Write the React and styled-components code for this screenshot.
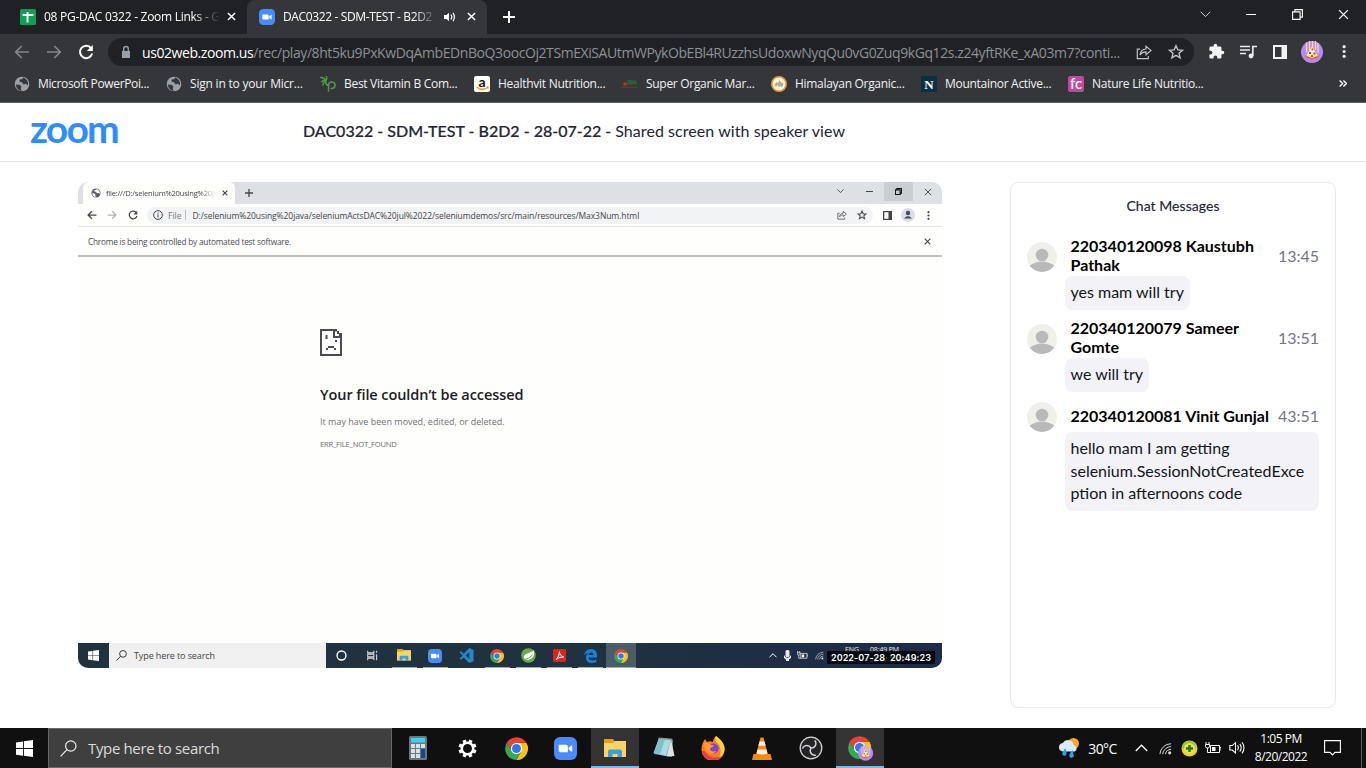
import React from "react";
import styled, { createGlobalStyle, css } from "styled-components";

const UI = `"Open Sans", "Noto Sans", sans-serif`;

const Global = createGlobalStyle`
  * { box-sizing: border-box; }
  body { margin: 0; background: #fff; font-family: ${UI}; overflow: hidden; }
  svg { display: block; flex: none; }
`;

const Screen = styled.div`
  width: 1366px;
  height: 768px;
  display: flex;
  flex-direction: column;
  overflow: hidden;
`;

const Label = styled.span`
  white-space: nowrap;
  letter-spacing: ${(p) => p.$ls || 0}px;
  color: ${(p) => p.$c || "inherit"};
`;

/* ---------- browser chrome ---------- */
const TabStrip = styled.div`
  height: 34px;
  flex: none;
  background: #202124;
  display: flex;
  color: #fff;
`;
const Tab = styled.div`
  width: ${(p) => p.$w}px;
  height: 34px;
  padding: 0 11px 1px ${(p) => p.$pad}px;
  display: flex;
  align-items: center;
  font-size: 12px;
  background: ${(p) => (p.$active ? "#35363a" : "transparent")};
  border-radius: 8px 8px 0 0;
`;
const TabTitle = styled.div`
  width: ${(p) => p.$w}px;
  margin-left: ${(p) => (p.$ml === undefined ? 8 : p.$ml)}px;
  overflow: hidden;
  white-space: nowrap;
  letter-spacing: ${(p) => p.$ls}px;
  mask-image: linear-gradient(90deg, #000 85%, transparent);
`;
const Spacer = styled.div`
  flex: ${(p) => (p.$w ? "none" : 1)};
  width: ${(p) => (p.$w ? p.$w + "px" : "auto")};
`;
const WindowButton = styled.div`
  width: ${(p) => p.$w || 46}px;
  height: ${(p) => p.$h || 29}px;
  display: flex;
  align-items: center;
  justify-content: center;
`;
const Toolbar = styled.div`
  height: 34px;
  flex: none;
  background: #35363a;
  display: flex;
  align-items: center;
  padding: 1px 0 0 14px;
`;
const Omnibox = styled.div`
  width: 1086px;
  height: 28px;
  margin: 1px 0 0 14px;
  border-radius: 14px;
  background: #202124;
  display: flex;
  align-items: center;
  padding: 0 10px 0 11px;
  color: #9aa0a6;
  font-size: 14px;
`;
const Url = styled.div`
  width: 984px;
  margin-left: 9px;
  white-space: nowrap;
  color: #8d9196;
  letter-spacing: -0.42px;
  b { font-weight: 400; color: #fff; }
`;
const Bookmarks = styled.div`
  height: 35px;
  flex: none;
  background: #35363a;
  border-bottom: 1px solid #5c5d61;
  padding: 0 0 3px 14px;
  display: flex;
  align-items: center;
  color: #f1f3f4;
  font-size: 12px;
`;
const Bookmark = styled.div`
  width: ${(p) => p.$w}px;
  display: flex;
  align-items: center;
  gap: 8px;
`;
const Avatar = styled.svg`
  border-radius: 50%;
`;

/* ---------- zoom page ---------- */
const Page = styled.main`
  height: 625px;
  flex: none;
  background: #fff;
  font-family: Lato, sans-serif;
`;
const PageHeader = styled.header`
  height: 59px;
  border-bottom: 1px solid #e8e8ec;
  display: flex;
  align-items: center;
  padding-left: 30px;
`;
const Wordmark = styled.div`
  width: 273px;
  height: 44px;
  line-height: 36px;
  font-size: 39px;
  font-weight: 700;
  letter-spacing: -1.8px;
  color: #2d8cff;
`;
const PageTitle = styled.h1`
  margin: 0 0 4px;
  font-size: 16px;
  font-weight: 400;
  color: #232333;
  white-space: nowrap;
  letter-spacing: 0.06px;
  b { font-weight: 500; letter-spacing: 0; -webkit-text-stroke: 0.2px #232333; }
`;
const Body = styled.div`
  display: flex;
  align-items: flex-start;
  padding: 20px 30px 0 78px;
  justify-content: space-between;
`;
const ChatPanel = styled.aside`
  width: 326px;
  height: 526px;
  border: 1px solid #e9e9f0;
  border-radius: 8px;
  padding: 13px 16px 0;
`;
const ChatTitle = styled.div`
  height: 20px;
  line-height: 19px;
  margin-bottom: 22px;
  text-align: center;
  font-size: 14px;
  color: #232333;
  -webkit-text-stroke: 0.15px #232333;
  letter-spacing: 0.05px;
`;
const Message = styled.div`
  margin-bottom: 10px;
`;
const MessageHead = styled.div`
  display: flex;
  align-items: center;
  min-height: 30px;
`;
const Sender = styled.div`
  width: 214px;
  padding: 0 0 3px 13.5px;
  margin: ${(p) => (p.$lines === 2 ? "-2px -10px 1px 0" : "0 -10px -1px 0")};
  font-size: 16px;
  line-height: 19px;
  font-weight: 700;
  color: #000;
  white-space: pre;
  height: ${(p) => (p.$lines === 2 ? 39 : 23)}px;
`;
const Time = styled.div`
  flex: 1;
  padding-bottom: ${(p) => (p.$lines === 2 ? 4 : 3)}px;
  text-align: right;
  font-size: 16px;
  color: #747487;
`;
const Bubble = styled.div`
  width: fit-content;
  margin-left: 38px;
  padding: 5px ${(p) => (p.$long ? 11 : 6)}px 6.5px 5.5px;
  border-radius: 8px;
  background: #f2f2f7;
  color: #131619;
  font-size: 16px;
  line-height: 22.6px;
  overflow-wrap: anywhere;
`;

/* ---------- shared screen video ---------- */
const Video = styled.section`
  width: 864px;
  height: 486px;
  border-radius: 10px;
  overflow: hidden;
  background: #fefefd;
  display: flex;
  flex-direction: column;
  font-family: ${UI};
  color: #44474a;
`;
const VideoTabs = styled.div`
  height: 22px;
  flex: none;
  background: #dee0e4;
  padding-left: 5px;
  display: flex;
`;
const VideoTab = styled.div`
  width: 152px;
  padding: 0 7px 0 8px;
  display: flex;
  align-items: center;
  background: #fefefd;
  border-radius: 6px 6px 0 0;
  font-size: 7.6px;
`;
const VideoWindowButton = styled.div`
  width: ${(p) => p.$w || 29}px;
  height: ${(p) => p.$h || 19}px;
  display: flex;
  align-items: center;
  justify-content: center;
  background: ${(p) => (p.$on ? "#cbcdd0" : "transparent")};
`;
const VideoToolbar = styled.div`
  height: 23px;
  flex: none;
  border-bottom: 1px solid #e6e7e9;
  display: flex;
  align-items: center;
  padding-left: 9px;
`;
const VideoUrl = styled.div`
  width: 726px;
  height: 17px;
  margin-left: 9px;
  border-radius: 9px;
  background: #f2f3f5;
  display: flex;
  align-items: center;
  padding: 0 6px;
  font-size: 8.5px;
`;
const Divider = styled.i`
  width: 1px;
  height: 10px;
  background: #b9bbbe;
  margin: 0 6px 0 4px;
`;
const InfoBar = styled.div`
  height: 30px;
  flex: none;
  border-bottom: 2px solid #bdbdbf;
  display: flex;
  align-items: center;
  justify-content: space-between;
  padding: 0 11px 0 10px;
  font-size: 8.3px;
  color: #4c4f52;
`;
const ErrorPage = styled.div`
  flex: 1;
  padding: 72px 0 0 242px;
  white-space: nowrap;
  h2 {
    margin: 29px 0 0;
    font-size: 14.5px;
    line-height: 20px;
    font-weight: 600;
    color: #202124;
    letter-spacing: -0.08px;
  }
  p { margin: 10px 0 0; font-size: 9px; line-height: 13px; color: #707274; letter-spacing: 0.01px; }
  small { display: block; margin-top: 10px; font-size: 7.6px; line-height: 12px; color: #6a6c6e; }
`;
const VideoTaskbar = styled.div`
  height: 25px;
  flex: none;
  background: linear-gradient(90deg, #1f333f, #20323f 55%, #1c2b49);
  display: flex;
  color: #fff;
`;
const VideoStart = styled.div`
  width: 31px;
  display: flex;
  align-items: center;
  justify-content: center;
`;
const VideoSearch = styled.div`
  width: 217px;
  background: #f0f0f0;
  display: flex;
  align-items: center;
  gap: 7px;
  padding-left: 7px;
  color: #444;
  font-size: 9px;
`;
const VideoTask = styled.div`
  width: 30px;
  margin-right: 1px;
  display: flex;
  align-items: center;
  justify-content: center;
  background: ${(p) => (p.$active ? "#4b5c69" : "transparent")};
  background-image: ${(p) => (p.$open ? "linear-gradient(#76b9ed, #76b9ed)" : "none")};
  background-size: ${(p) => (p.$active ? 30 : 25)}px 1.5px;
  background-position: center bottom;
  background-repeat: no-repeat;
`;
const VideoTray = styled.div`
  width: 173px;
  display: flex;
  align-items: center;
  gap: 6.5px;
  position: relative;
`;
const VideoClock = styled.div`
  position: absolute;
  left: 76px;
  top: 1.5px;
  display: grid;
  grid-template-columns: 25px auto;
  font-size: 6.9px;
  line-height: 10px;
  color: #f2f3f5;
`;
const Timestamp = styled.div`
  position: absolute;
  left: 58px;
  top: 8px;
  width: 108px;
  height: 13px;
  background: rgba(0, 0, 0, 0.78);
  font: 600 9px/13px Inter, sans-serif;
  text-align: center;
  white-space: nowrap;
  letter-spacing: 0.1px;
`;

/* ---------- desktop taskbar ---------- */
const Taskbar = styled.footer`
  height: 40px;
  flex: none;
  background: #101010;
  display: flex;
  color: #fff;
`;
const Start = styled.div`
  width: 48px;
  display: flex;
  align-items: center;
  justify-content: center;
`;
const Search = styled.div`
  width: 344px;
  margin-right: 2px;
  border: 1px solid #686868;
  background: #3f3f3f;
  display: flex;
  align-items: center;
  gap: 11px;
  padding-left: 11px;
  color: #dcdcdc;
  font-size: 15px;
`;
const Task = styled.div`
  width: 48px;
  margin-right: 1px;
  display: flex;
  align-items: center;
  justify-content: center;
  ${(p) =>
    p.$active &&
    css`
      background: #333;
      box-shadow: inset 0 -2px #76b9ed;
    `}
`;
const Tray = styled.div`
  flex: 1;
  display: flex;
  align-items: center;
  padding-left: 173px;
`;
const TrayItem = styled.div`
  width: ${(p) => p.$w}px;
  display: flex;
  align-items: center;
  justify-content: center;
  font-size: 14px;
`;
const Clock = styled.div`
  width: 64px;
  text-align: center;
  font-size: 12px;
  line-height: 18px;
  letter-spacing: -0.5px;
  white-space: nowrap;
`;
const Edge = styled.div`
  width: 1px;
  height: 40px;
  background: #5a5a5a;
`;

/* ---------- icons ---------- */
const Line = ({ w = 16, h = w, box = "0 0 16 16", c = "currentColor", sw = 1.5, children, ...r }) => (
  <svg width={w} height={h} viewBox={box} fill="none" stroke={c} strokeWidth={sw} {...r}>
    {children}
  </svg>
);
const Close = ({ s = 9, c = "#fff", sw = 1.6 }) => (
  <Line w={s} box="0 0 10 10" c={c} sw={sw}><path d="M1 1l8 8M9 1L1 9" /></Line>
);
const Plus = ({ s = 12, c = "#fff", sw = 2 }) => (
  <Line w={s} box="0 0 12 12" c={c} sw={sw}><path d="M6 0v12M0 6h12" /></Line>
);
const Arrow = ({ s = 16, c, flip, sw = 1.7 }) => (
  <Line w={s} c={c} sw={sw}>
    <path d={flip ? "M1 8h13M8.3 2l6 6-6 6" : "M15 8H2M7.7 2l-6 6 6 6"} />
  </Line>
);
const Reload = ({ s = 16, c = "#fff", sw = 2 }) => (
  <Line w={s} c={c} sw={sw}>
    <path d="M13.2 4.2A6.2 6.2 0 1 0 14.2 9.6" />
    <path d="M14.8 1v6h-6z" fill={c} stroke="none" />
  </Line>
);
const Down = ({ s = 11, c = "#ccc", up, sw = 1 }) => (
  <Line w={s} h={s * 0.6} box="0 0 12 7" c={c} sw={sw}>
    <path d={up ? "M.7 6.3L6 1l5.3 5.3" : "M.7.7L6 6 11.3.7"} />
  </Line>
);
const Restore = ({ s = 11, c = "#fff", sw = 1.1 }) => (
  <Line w={s} box="0 0 11 11" c={c} sw={sw}><path d="M.6 2.9h7.5v7.5H.6zM2.9 2.9V.6h7.5v7.5H8.1" /></Line>
);
const Share = ({ s = 16, c = "#bdc1c6", sw = 1.2 }) => (
  <Line w={s} c={c} sw={sw}>
    <path d="M4.2 5.2H1.3v9.4h11v-2.5M4 11c.4-4 2.7-5.9 6-6V2.2L15 6.4l-5 4.2V7.9C7.2 7.8 5.5 8.8 4 11z" />
  </Line>
);
const Star = ({ s = 16, c = "#bdc1c6", sw = 1.4 }) => (
  <Line w={s} c={c} sw={sw}>
    <path d="M8 1.7l1.9 4.2 4.6.4-3.5 3 1.1 4.5L8 11.4l-4.1 2.4L5 9.3l-3.5-3 4.6-.4z" />
  </Line>
);
const Puzzle = () => (
  <svg width="17" height="17" viewBox="0 0 24 24" fill="#f1f3f4">
    <path d="M20.500 11H19V7a2 2 0 0 0-2-2h-4V3.500a2.500 2.500 0 0 0-5 0V5H4a2 2 0 0 0-2 2v3.800h1.500a2.700 2.700 0 0 1 0 5.400H2V20a2 2 0 0 0 2 2h3.800v-1.500a2.700 2.700 0 0 1 5.400 0V22H17a2 2 0 0 0 2-2v-4h1.500a2.500 2.500 0 0 0 0-5z" />
  </svg>
);
const Queue = () => (
  <Line w={17} h={14} box="0 0 17 14" c="#e8eaed" sw={1.7}>
    <path d="M0 1.500h10M0 5h10M0 8.500h6M12.800 11V1.500H17" />
    <circle cx="11" cy="11" r="2.400" fill="#e8eaed" stroke="none" />
  </Line>
);
const Side = ({ s = 14, c = "#f1f3f4" }) => (
  <svg width={s} height={s} viewBox="0 0 14 14">
    <path fillRule="evenodd" fill={c} d="M0 0h14v14H0zM2 2v10h6.500V2z" />
  </svg>
);
const Dots = ({ h = 13, c = "#f1f3f4" }) => (
  <svg width={h / 3} height={h} viewBox="0 0 4 13" fill={c}>
    <circle cx="2" cy="1.700" r="1.600" /><circle cx="2" cy="6.500" r="1.600" /><circle cx="2" cy="11.300" r="1.600" />
  </svg>
);
const PizzaArt = () => (
  <>
    <circle cx="11" cy="11" r="11" fill="#b58af5" />
    <path d="M5.500 1.500v10M8.500 0v9M11.500 0v9M14.500 0v9M17 2v10" stroke="#f1df9e" strokeWidth="1.300" />
    <path d="M11 5.500l-6.500 10q6.500 4.500 13 0z" fill="#fff0b5" />
    <path d="M4.300 15q6.700 5 13.400 0" stroke="#f0633b" strokeWidth="1.700" fill="none" />
    <path d="M10.500 7.500h1.700v1.700h-1.700zM8 11h2v2H8zM12.500 11.500h2v2h-2zM10 14.300h2V16h-2z" fill="#d8352c" />
  </>
);
const Globe = ({ s = 15, c = "#9aa0a6", land = "#35363a" }) => (
  <svg width={s} height={s} viewBox="0 0 16 16">
    <circle cx="8" cy="8" r="7.300" fill={c} />
    <path d="M2 8.500l3.500.3 2 1.800-.8 2.100 1.200 2.300C4.500 14.500 2 12 2 8.500zM9.500 1.500L7.800 3.200l-2.300.3v2l2.800 1 1 2 2.500-.7 2.300 1.400c.3-3.500-1-6-4.600-7.700z" fill={land} />
  </svg>
);
const Sheets = () => (
  <svg width="16" height="16" viewBox="0 0 16 16">
    <rect width="16" height="16" rx="1.500" fill="#109d58" />
    <path d="M2.500 6h11M7.500 3v10.500" stroke="#fff" strokeWidth="1.900" />
  </svg>
);
const ZoomIcon = ({ s = 16 }) => (
  <svg width={s} height={s} viewBox="0 0 24 24">
    <rect width="24" height="24" rx="6.500" fill="#4a8cf7" />
    <path d="M5 8.200h7.500q2 0 2 2v5.600H7q-2 0-2-2zM15.300 10.900L19 8.300v7.400l-3.700-2.600z" fill="#fff" />
  </svg>
);
const Chrome = ({ s = 23, badge }) => (
  <svg width={badge ? s + 2 : s} height={badge ? s + 2 : s} viewBox={badge ? "0 0 26 26" : "0 0 24 24"}>
    <path d="M12 12V6h10.300A11.900 11.900 0 0 1 11.700 24L17 15z" fill="#fbc116" />
    <path d="M12 12l5 3-5.300 9A11.900 11.900 0 0 1 1.800 6L7 15z" fill="#34a853" />
    <path d="M1.800 6A11.900 11.900 0 0 1 22.300 6H12a6 6 0 0 0-5.200 9z" fill="#ea4335" />
    <circle cx="12" cy="12" r="6" fill="#fff" />
    <circle cx="12" cy="12" r="4.700" fill="#3278e8" />
    {badge && <g transform="translate(10.500 10) scale(.71)"><PizzaArt /></g>}
  </svg>
);
const Windows = ({ s = 17, c = "#fff" }) => (
  <svg width={s} height={s} viewBox="0 0 17 17" fill={c}>
    <path d="M0 2.400l7-1v6.700H0zM7.900 1.300L17 0v8.100H7.900zM0 9h7v6.700l-7-1zM7.900 9H17v8l-9.100-1.300z" />
  </svg>
);
const Glass = ({ s = 17, c = "#eee", sw = 1.2 }) => (
  <Line w={s} box="0 0 17 17" c={c} sw={sw}><circle cx="10.800" cy="6" r="5.200" /><path d="M7 9.700L.6 16.400" /></Line>
);
const Folder = ({ s = 22 }) => (
  <svg width={s} height={s * 0.86} viewBox="0 0 22 19">
    <path d="M0 0h9l1.500 2H22v16H0z" fill="#e0a21b" />
    <path d="M0 4h9l2-2h11v16H0z" fill="#fcd462" />
    <path d="M4 19v-6.500q0-2 2-2h10q2 0 2 2V19h-4.500v-4h-5v4z" fill="#3f9ede" />
  </svg>
);
const Calc = () => (
  <svg width="18" height="24" viewBox="0 0 18 24">
    <rect width="18" height="24" rx="1.500" fill="#6d7782" />
    <path d="M2 2h14v4.500H2z" fill="#3ed1f7" />
    <path d="M2 8h4v4H2zM7 8h4v4H7zM12 8h4v4h-4zM2 13h4v4H2zM7 13h4v4H7zM2 18h4v4H2zM7 18h4v4H7z" fill="#d9e0e6" />
    <path d="M12 13h4v9h-4z" fill="#0f4a91" />
  </svg>
);
const Gear = () => (
  <svg width="19" height="19" viewBox="-10 -10 20 20" fill="none" stroke="#fff">
    <circle r="6" strokeWidth="2.600" />
    {[0, 45, 90, 135, 180, 225, 270, 315].map((a) => (
      <path key={a} transform={`rotate(${a + 22.5})`} d="M0-6.500V-9.500" strokeWidth="3.600" />
    ))}
  </svg>
);
const Notepad = () => (
  <svg width="24" height="24" viewBox="0 0 24 24">
    <path d="M7 2l14 2-1 17L2 18z" fill="#4d96a3" />
    <path d="M7 2l12 1-5 17L1.500 17z" fill="#a9dbe2" />
    <path d="M7 3l6 .5L8 18l-6-1z" fill="#7fc0cb" />
    <path d="M19 3l3.500 17-8 .5z" fill="#dce0de" />
    <path d="M7 1.500l13.500 1.200-.4 1.500L6.500 3z" fill="#8b949a" />
  </svg>
);
const Firefox = () => (
  <svg width="24" height="24" viewBox="0 0 24 24">
    <path d="M15 0c5 4 9 8 8.500 14A11.500 11.500 0 0 1 .5 13C.5 9 2 6 4 3l2 3c2-1 4-1 6 0 0-2 1-4 3-6z" fill="#ff7a25" />
    <path d="M15 0c5 4 9 8 8.500 14-.5 4-3 7-6 8.500C21 17 20 9 15 6c-1-2-1-4 0-6z" fill="#ffd43a" />
    <path d="M1 15a11.300 11.300 0 0 0 20 5c-6 3-14 2-17-5z" fill="#f6334e" />
    <circle cx="12.500" cy="12.500" r="5" fill="#7b3fe0" />
    <path d="M3 7c3-1 5 0 7 2l3 .5c-1 2-3 2-4 3 0 3 3 3.500 6 2.500-2 4-9 4-11-1z" fill="#ff9a2b" />
  </svg>
);
const Vlc = () => (
  <svg width="20" height="23" viewBox="0 0 20 23">
    <path d="M1.500 17h17L20 23H0z" fill="#f58a0c" />
    <path d="M8.500.5h3L16 18q-6 3-12 0z" fill="#f58a0c" />
    <path d="M7.500 4.500h5l1.100 4.200H6.400zM5.500 12.500h9l1 4q-5.500 2-11 0z" fill="#eee" />
  </svg>
);
const Obs = () => (
  <svg width="24" height="24" viewBox="-12 -12 24 24" fill="none" stroke="#d5d5d5">
    <circle r="10.800" fill="#242426" strokeWidth="1.300" />
    {[0, 120, 240].map((a) => (
      <path key={a} transform={`rotate(${a - 50})`} d="M0 0C.8-2.500 0-4.800-2.200-6C-3.500-6.700-4.800-6.700-6-6" strokeWidth="1.500" />
    ))}
  </svg>
);
const Wifi = ({ s = 15, c = "#ddd" }) => (
  <Line w={s} box="0 0 15 15" c={c} sw={1.1}>
    <path d="M1 14A13 13 0 0 1 14 2M4.200 14A9.800 9.800 0 0 1 14 5.300M7.500 14A6.500 6.500 0 0 1 14 8.500" />
    <circle cx="12.300" cy="12.500" r="1.800" fill={c} stroke="none" />
  </Line>
);
const Battery = ({ s = 16 }) => (
  <Line w={s} h={s * 0.75} box="0 0 16 12" c="#fff" sw={1}>
    <path d="M5.500 3.500h9v7h-9zM15 5.500h1v3M1 0v2.500M4 0v2.500M.5 2.500h4v2q0 1.500-2 1.500t-2-1.500zM2.500 6v4.500h3" />
    <path d="M7 5h3.500v4H7z" fill="#fff" stroke="none" />
  </Line>
);
const Volume = ({ s = 17, c = "#fff" }) => (
  <Line w={s} h={s * 0.8} box="0 0 17 14" c={c} sw={1.1}>
    <path d="M.6 4.700h2.500l3.400-3v10.600l-3.400-3H.6zM8.500 4.500q1.800 2.500 0 5M10.800 3q3 4 0 8M13.200 1.300q4 5.700 0 11.400" />
  </Line>
);
const Shield = () => (
  <svg width="17" height="17" viewBox="0 0 17 17">
    <circle cx="8.500" cy="8.500" r="8" fill="#f4c92c" />
    <path d="M1 9a7.600 7.600 0 0 1 12-6.500L15 8q-7-3-14 1z" fill="#8cc63e" />
    <circle cx="8.500" cy="8.500" r="5.500" fill="#e8e34a" />
    <path d="M8.500 5v7M5 8.500h7" stroke="#177a35" strokeWidth="2.400" />
  </svg>
);
const Weather = () => (
  <svg width="22" height="22" viewBox="0 0 22 22">
    <circle cx="15.500" cy="6.500" r="5.500" fill="#f9a726" />
    <path d="M4.500 14.500a4.300 4.300 0 0 1 .3-8.500 6 6 0 0 1 11 2 3.500 3.500 0 0 1 1 6.500z" fill="#dce9f8" />
    <path d="M7.500 11l1 5a2.200 2.200 0 1 1-4.300 1q0-2 3.300-6zM14.500 13l1 4.500a2.200 2.200 0 1 1-4.200 1q0-2 3.200-5.500z" fill="#27a3ee" />
  </svg>
);
const Person = ({ s = 30 }) => (
  <Avatar width={s} height={s} viewBox="0 0 30 30">
    <rect width="30" height="30" fill="#f0f0eb" />
    <circle cx="15" cy="13" r="6.300" fill="#b9b9b9" />
    <path d="M2 24q13-9 26 0v6H2z" fill="#b9b9b9" />
  </Avatar>
);
const SadFile = () => (
  <svg width="22" height="27" viewBox="0 0 22 27" fill="#4a4c50">
    <path fillRule="evenodd" d="M0 0h17v2h2v2h3v23H0zM2 2v23h18V9h-7V2zM15 2.500V7h4V5h-2V2.500z" />
    <path d="M5.500 6h2v4h-2zM15 11h2v2h-2zM8 17h6v2H8zM6 19h2v2H6zM14 19h2v2h-2z" />
  </svg>
);
const Letter = ({ bg, fg, ch, font, rx = 1 }) => (
  <svg width="16" height="16" viewBox="0 0 16 16">
    <rect width="16" height="16" rx={rx} fill={bg} />
    <text x="8" y={ch === "a" ? 10.5 : 12.5} textAnchor="middle" fill={fg} style={{ font }}>{ch}</text>
    {ch === "a" && <path d="M2.500 11q5.500 4.500 11 .5M13.800 10v2.500" fill="none" stroke="#f90" strokeWidth="1.500" />}
  </svg>
);
const Sprout = () => (
  <Line c="#4f9a46" sw={1.5}>
    <path d="M8.500 15.500V8.500a3.300 3.300 0 1 1 3.300 4H10.500M0 1.500q4-.5 6 3M1 6q3-2.500 5-1.500M6 4.500q-1 4 2.500 5M3 9.500q0-3 3-5M6 0q1.500 2 0 4.500" />
  </Line>
);
const Market = () => (
  <svg width="16" height="16" viewBox="0 0 16 16">
    <path d="M5 5l2-1.500 3 1 3-.5 2 2v2.500H5z" fill="#24613a" />
    <circle cx="3" cy="8" r="1.800" fill="#cf2b24" />
    <path d="M0 11.300h15.500" stroke="#7e2e2c" strokeWidth="1.500" />
  </svg>
);
const Himalaya = () => (
  <svg width="16" height="16" viewBox="0 0 16 16">
    <circle cx="8" cy="8" r="7.200" fill="#fff5e2" stroke="#e9982f" strokeWidth="1.600" />
    <path d="M3.500 9l2-3 1.500 1L8.500 4 10 6.500l2.500.5-.5 2.500-1.500 2-1-2-1.500 2-1.500-2.500-1.500 2z" fill="#b9a890" />
  </svg>
);

const bookmarks = [
  [152, <Globe s={16} />, "Microsoft PowerPoi...", -0.35],
  [154, <Globe s={16} />, "Sign in to your Micr...", -0.2],
  [154, <Sprout />, "Best Vitamin B Com...", -0.3],
  [148, <Letter bg="#fff" fg="#111" ch="a" rx={2} font="700 14px Lato" />, "Healthvit Nutrition...", -0.27],
  [149, <Market />, "Super Organic Mar...", -0.3],
  [150, <Himalaya />, "Himalayan Organic...", -0.3],
  [147, <Letter bg="#0b3044" fg="#fff" ch="N" font="700 13px 'Liberation Serif'" />, "Mountainor Active...", -0.29],
  [150, <Letter bg="#c2489c" fg="#fff" ch="fc" rx={2} font="500 15px Lato" />, "Nature Life Nutritio...", -0.28],
];

const messages = [
  ["220340120098 Kaustubh\nPathak", "13:45", "yes mam will try"],
  ["220340120079 Sameer\nGomte", "13:51", "we will try"],
  ["220340120081 Vinit Gunjal", "43:51", "hello mam I am getting selenium.SessionNotCreatedException in afternoons code"],
];

function Browser() {
  return (
    <>
      <TabStrip>
        <Tab $w={247} $pad={20}>
          <Sheets />
          <TabTitle $w={176} $ls={-0.27}>08 PG-DAC 0322 - Zoom Links - Google</TabTitle>
          <Spacer />
          <Close />
        </Tab>
        <Tab $w={240} $pad={12} $active>
          <ZoomIcon />
          <TabTitle $w={154} $ls={-0.36}>DAC0322 - SDM-TEST - B2D2 - 28</TabTitle>
          <Spacer $w={7} />
          <Line w={11} h={10} box="0 0 11 10" c="#fff" sw={1.2}>
            <path d="M0 3h2.500L5 .8v8.400L2.500 7H0z" fill="#fff" stroke="none" />
            <path d="M6.800 2.500q2 2.500 0 5M9 .8q2.800 4.200 0 8.400" />
          </Line>
          <Spacer />
          <Close />
        </Tab>
        <Spacer $w={16} />
        <WindowButton $w={12} $h={34}><Plus /></WindowButton>
        <Spacer />
        <WindowButton><Down c="#ddd" /></WindowButton>
        <WindowButton><Line w={10} h={1} box="0 0 10 1" c="#fff"><path d="M0 .5h10" /></Line></WindowButton>
        <WindowButton><Restore /></WindowButton>
        <WindowButton><Close s={11} sw={1.1} /></WindowButton>
      </TabStrip>
      <Toolbar>
        <Arrow c="#85878a" />
        <Spacer $w={16} />
        <Arrow c="#85878a" flip />
        <Spacer $w={16} />
        <Reload />
        <Omnibox>
          <svg width="14" height="14" viewBox="0 0 14 14">
            <path d="M3 6h8v7H3z" fill="#9aa0a6" />
            <path d="M4.700 6V3.800a2.300 2.300 0 0 1 4.600 0V6" fill="none" stroke="#9aa0a6" strokeWidth="1.400" />
          </svg>
          <Url><b>us02web.zoom.us</b>/rec/play/8ht5ku9PxKwDqAmbEDnBoQ3oocOj2TSmEXiSAUtmWPykObEBl4RUzzhsUdoxwNyqQu0vG0Zuq9kGq12s.z24yftRKe_xA03m7?conti...</Url>
          <Spacer />
          <Share />
          <Spacer $w={16} />
          <Star />
        </Omnibox>
        <Spacer $w={14} /><Puzzle />
        <Spacer $w={15} /><Queue />
        <Spacer $w={16} /><Side />
        <Spacer $w={14} />
        <svg width="22" height="22" viewBox="0 0 22 22"><PizzaArt /></svg>
        <Spacer $w={19} /><Dots />
      </Toolbar>
      <Bookmarks>
        {bookmarks.map(([w, icon, text, ls]) => (
          <Bookmark key={text} $w={w}>{icon}<Label $ls={ls}>{text}</Label></Bookmark>
        ))}
        <Spacer />
        <Line w={8} h={7} box="0 0 8 7" c="#fff" sw={1.4}><path d="M.6.5l3 3-3 3M4.400.5l3 3-3 3" /></Line>
        <Spacer $w={19} />
      </Bookmarks>
    </>
  );
}

function SharedScreen() {
  const ink = "#44474a";
  return (
    <Video>
      <VideoTabs>
        <VideoTab>
          <Globe s={10} c="#5c6064" land="#fefefd" />
          <TabTitle $w={110} $ml={5} $ls={-0.22}>file:///D:/selenium%20using%20java</TabTitle>
          <Spacer />
          <Close s={6} c={ink} sw={1.9} />
        </VideoTab>
        <Spacer $w={10} />
        <VideoWindowButton $w={8} $h={22}><Plus s={8} c={ink} /></VideoWindowButton>
        <Spacer />
        <VideoWindowButton><Down s={7} c={ink} sw={1.5} /></VideoWindowButton>
        <VideoWindowButton><Line w={7} h={1} box="0 0 7 1" c={ink}><path d="M0 .5h7" /></Line></VideoWindowButton>
        <VideoWindowButton $on><Restore s={7} c="#111" sw={1.8} /></VideoWindowButton>
        <VideoWindowButton><Close s={8} c={ink} sw={1.2} /></VideoWindowButton>
      </VideoTabs>
      <VideoToolbar>
        <Arrow s={10} c={ink} sw={2} />
        <Spacer $w={10} />
        <Arrow s={10} c="#b2b4b6" flip sw={2} />
        <Spacer $w={11} />
        <Reload s={10} c={ink} />
        <VideoUrl>
          <Line w={10} c={ink} sw={1.6}><circle cx="8" cy="8" r="7" /><path d="M8 7v5M8 4v1.800" /></Line>
          <Spacer $w={5} />
          <Label $c="#77797c">File</Label>
          <Divider />
          <Label $ls={-0.08}>D:/selenium%20using%20java/seleniumActsDAC%20jul%2022/seleniumdemos/src/main/resources/Max3Num.html</Label>
          <Spacer />
          <Share s={10} c="#66696c" sw={1.5} />
          <Spacer $w={10} />
          <Star s={10} c={ink} sw={1.7} />
        </VideoUrl>
        <Spacer $w={10} /><Side s={9} c={ink} />
        <Spacer $w={9} />
        <svg width="14" height="14" viewBox="0 0 14 14">
          <circle cx="7" cy="7" r="7" fill="#dcdde6" /><circle cx="7" cy="5" r="2.200" fill="#454a66" /><path d="M3 10.500q4-5 8 0z" fill="#454a66" />
        </svg>
        <Spacer $w={12} /><Dots h={9} c={ink} />
      </VideoToolbar>
      <InfoBar>
        <Label $ls={-0.23}>Chrome is being controlled by automated test software.</Label>
        <Close s={7} c={ink} />
      </InfoBar>
      <ErrorPage>
        <SadFile />
        <h2>Your file couldn’t be accessed</h2>
        <p>It may have been moved, edited, or deleted.</p>
        <small><Label $ls={-0.2}>ERR_FILE_NOT_FOUND</Label></small>
      </ErrorPage>
      <VideoTaskbar>
        <VideoStart><Windows s={11} /></VideoStart>
        <VideoSearch><Glass s={11} c="#333" sw={1.5} /><Label $ls={-0.1}>Type here to search</Label></VideoSearch>
        <VideoTask><Line w={11} c="#fff" sw={2}><circle cx="8" cy="8" r="6.500" /></Line></VideoTask>
        <VideoTask><Line w={11} c="#ddd" sw={1.5}><path d="M1 1v3h9V1M1 15v-3h9v3M1 6h9v4H1zM14 1v3M14 6v9" /></Line></VideoTask>
        <Spacer $w={1} />
        <VideoTask $open><Folder s={14} /></VideoTask>
        <VideoTask $open><ZoomIcon s={14} /></VideoTask>
        <VideoTask>
          <svg width="15" height="15" viewBox="0 0 16 16"><path d="M11 0l4.500 2v12L11 16 5 10 2 12.500.5 11.500 4 8 .5 4.500 2 3.500 5 6zM11 4.500L7 8l4 3.500z" fill="#2489ca" fillRule="evenodd" /></svg>
        </VideoTask>
        <VideoTask $open><Chrome s={14} /></VideoTask>
        <VideoTask $open>
          <svg width="15" height="15" viewBox="0 0 16 16"><circle cx="8" cy="8" r="7.800" fill="#68ad47" /><path d="M14 2.500q1 9-6 10-4 .5-5-2c-.5-5 6-4 11-8z" fill="#fff" /><path d="M3 12.500q6-1 9-5" stroke="#68ad47" fill="none" /></svg>
        </VideoTask>
        <VideoTask $open>
          <svg width="13" height="13" viewBox="0 0 13 13"><rect width="13" height="13" rx="1" fill="#d9241c" /><path d="M3 10.500q3.500-3 3.500-8 0 4.500 4.500 5.500-4-.5-8 2.500z" stroke="#fff" fill="none" /></svg>
        </VideoTask>
        <VideoTask $open>
          <svg width="13" height="14" viewBox="0 0 13 14"><path d="M0 6Q1.500 0 7 0q6 0 6 7v1.500H4.500q.5 3 4 3 2 0 3.800-1v2.700Q10.500 14 8 14 2 14 2 8.500 2 5 5.500 3.500 2 4 0 6zM4.700 6h4.800Q9.300 3.300 7.200 3.300T4.700 6z" fill="#1683df" fillRule="evenodd" /></svg>
        </VideoTask>
        <VideoTask $open $active><Chrome s={14} /></VideoTask>
        <Spacer />
        <VideoTray>
          <Down s={8} c="#fff" up sw={1.5} />
          <svg width="7" height="11" viewBox="0 0 7 11" fill="#e8e8e8"><rect x="1.500" width="4" height="7" rx="1.500" /><path d="M0 5q3.500 6 7 0v3L5 9.500V11H2V9.500L0 8z" /></svg>
          <Battery s={11} />
          <Wifi s={9} />
          <Volume s={10} c="#8d96a5" />
          <VideoClock><span>ENG</span><Label $ls={-0.1}>08:49 PM</Label><span>&nbsp;US</span><Label $ls={-0.1}>28-07-2022</Label></VideoClock>
          <Timestamp>2022-07-28&nbsp; 20:49:23</Timestamp>
        </VideoTray>
      </VideoTaskbar>
    </Video>
  );
}

export default function App() {
  return (
    <Screen>
      <Global />
      <Browser />
      <Page>
        <PageHeader>
          <Wordmark>zoom</Wordmark>
          <PageTitle><b>DAC0322 - SDM-TEST - B2D2 - 28-07-22 - </b>Shared screen with speaker view</PageTitle>
        </PageHeader>
        <Body>
          <SharedScreen />
          <ChatPanel>
            <ChatTitle>Chat Messages</ChatTitle>
            {messages.map(([name, time, text]) => {
              const lines = name.split("\n").length;
              return (
                <Message key={name}>
                  <MessageHead>
                    <Person />
                    <Sender $lines={lines}>{name}</Sender>
                    <Time $lines={lines}>{time}</Time>
                  </MessageHead>
                  <Bubble $long={text.length > 40}>{text}</Bubble>
                </Message>
              );
            })}
          </ChatPanel>
        </Body>
      </Page>
      <Taskbar>
        <Start><Windows /></Start>
        <Search><Glass /><Label $ls={-0.35}>Type here to search</Label></Search>
        <Task><Calc /></Task>
        <Task><Gear /></Task>
        <Task><Chrome /></Task>
        <Task><ZoomIcon s={23} /></Task>
        <Spacer $w={1} />
        <Task $active><Folder /></Task>
        <Task><Notepad /></Task>
        <Task><Firefox /></Task>
        <Task><Vlc /></Task>
        <Task><Obs /></Task>
        <Task $active><Chrome badge /></Task>
        <Tray>
          <Weather />
          <Spacer $w={7} />
          <TrayItem $w={31}><Label $ls={-0.6}>30°C</Label></TrayItem>
          <Spacer $w={11} />
          <TrayItem $w={24}><Down s={13} c="#fff" up sw={1.2} /></TrayItem>
          <TrayItem $w={24}><Wifi s={13} /></TrayItem>
          <TrayItem $w={24}><Shield /></TrayItem>
          <TrayItem $w={24}><Battery /></TrayItem>
          <TrayItem $w={24}><Volume /></TrayItem>
          <Clock>1:05 PM<br />8/20/2022</Clock>
          <TrayItem $w={38}><Line w={17} h={16} box="0 0 17 16" c="#fff" sw={1.1}><path d="M.6.6h15.800v11.800H11L8.500 15 6 12.400H.6z" /></Line></TrayItem>
          <Spacer />
          <Edge />
          <Spacer $w={4} />
        </Tray>
      </Taskbar>
    </Screen>
  );
}
